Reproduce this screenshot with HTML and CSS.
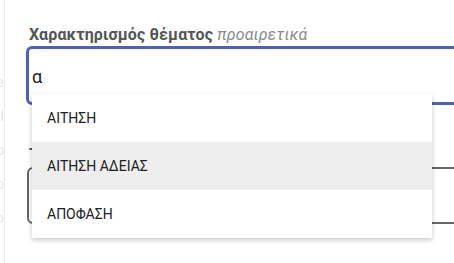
FILE: index.html
```html
<!DOCTYPE html>
<html lang="el">
<head>
    <meta charset="UTF-8">
    <meta name="viewport" content="width=device-width, initial-scale=1.0">
    <title>Χαρακτηρισμός θέματος</title>
    <link rel="stylesheet" href="styles.css">
</head>
<body>
    <div class="layout">
        <aside class="sidebar">
            <span>e</span>
            <span>l</span>
            <span>o</span>
            <span>o</span>
            <span>o</span>
        </aside>

        <form class="form">
            <div class="field">
                <label class="field-label" for="subject-type">
                    Χαρακτηρισμός θέματος <em class="optional">προαιρετικά</em>
                </label>
                <div class="field-box focused">
                    <input type="text" id="subject-type" value="α" autocomplete="off">
                </div>

                <ul class="suggestions">
                    <li>ΑΙΤΗΣΗ</li>
                    <li class="active">ΑΙΤΗΣΗ ΑΔΕΙΑΣ</li>
                    <li>ΑΠΟΦΑΣΗ</li>
                </ul>
            </div>

            <div class="field">
                <label class="field-label" for="subject-title">Τίτλος</label>
                <div class="field-box">
                    <input type="text" id="subject-title">
                </div>
            </div>
        </form>
    </div>
</body>
</html>
```

FILE: styles.css
```css
:root {
    --primary-color: #5061bd;
    --text-color: #212121;
    --label-color: #555555;
    --muted-color: #8a8a8a;
    --border-color: #646464;
    --hover-color: #eeeeee;
}

body {
    font-family: Roboto, "Noto Sans", "Liberation Sans", sans-serif;
    color: var(--text-color);
    background-color: white;
    margin: 0;
    padding: 0;
    overflow: hidden;
}

.layout {
    display: flex;
    height: 263px;
}

.sidebar {
    width: 4px;
    flex-shrink: 0;
    border-right: 1px solid #ececec;
    overflow: hidden;
    display: flex;
    flex-direction: column;
    align-items: flex-end;
    padding-top: 72px;
    gap: 14px;
    color: #e6e6e6;
    font-size: 15px;
    line-height: 20px;
}

.form {
    width: 520px;
    flex-shrink: 0;
    padding: 25px 0 0 22px;
}

.field {
    position: relative;
    margin-bottom: 41px;
}

.field-label {
    display: block;
    padding-left: 2px;
    margin-bottom: 2px;
    font-size: 16px;
    line-height: 20px;
    letter-spacing: 0.15px;
    font-weight: bold;
    color: var(--label-color);
}

.optional {
    font-weight: normal;
    color: var(--muted-color);
}

.field-box {
    border: 2px solid var(--border-color);
    border-radius: 6px;
    padding: 16px 0 13px 3px;
}

.field-box.focused {
    border: 3px solid var(--primary-color);
    margin: -1px;
}

.field-box input {
    display: block;
    width: 100%;
    border: none;
    outline: none;
    padding: 0;
    margin: 0;
    background: transparent;
    font-family: inherit;
    font-size: 18px;
    line-height: 24px;
    height: 24px;
    color: var(--text-color);
}

.suggestions {
    position: absolute;
    top: 69px;
    left: 5px;
    width: 400px;
    margin: 0;
    padding: 0;
    list-style: none;
    background-color: white;
    box-shadow: 0 2px 5px rgba(0, 0, 0, 0.22);
    z-index: 10;
}

.suggestions li {
    height: 48px;
    line-height: 48px;
    padding-left: 15px;
    font-size: 14px;
    color: var(--text-color);
}

.suggestions li.active {
    background-color: var(--hover-color);
}
```
